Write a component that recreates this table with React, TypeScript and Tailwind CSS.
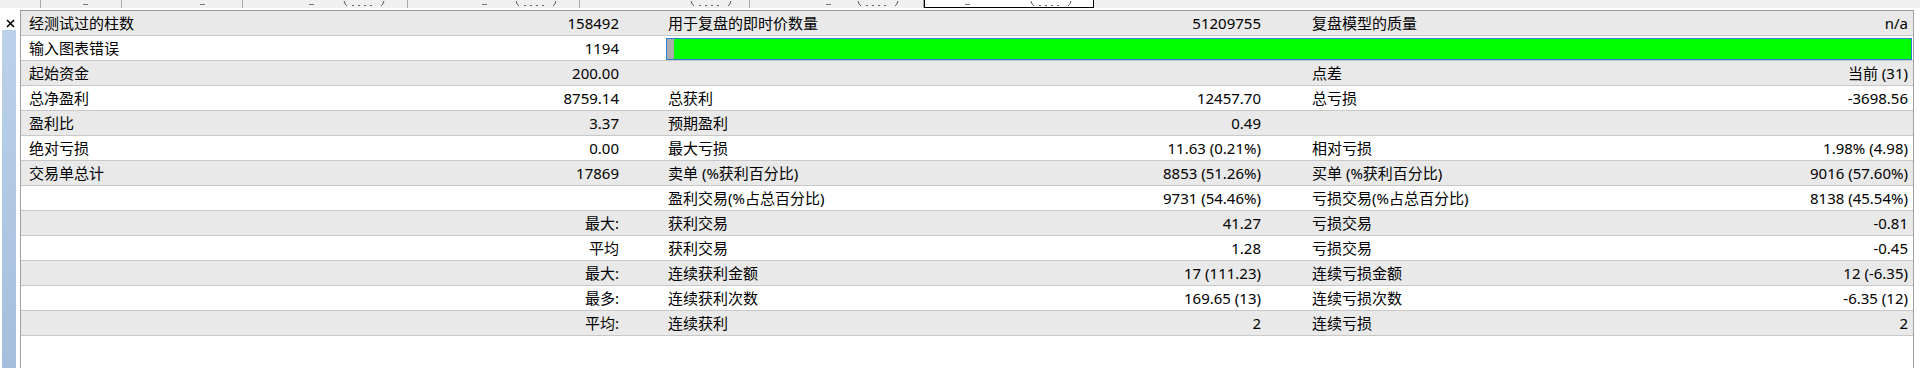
import React from "react";

type Row = {
  l1?: string;
  v1?: string;
  l2?: string;
  v2?: string;
  l3?: string;
  v3?: string;
  bar?: boolean;
};

const rows: Row[] = [
  { l1: "经测试过的柱数", v1: "158492", l2: "用于复盘的即时价数量", v2: "51209755", l3: "复盘模型的质量", v3: "n/a" },
  { l1: "输入图表错误", v1: "1194", bar: true },
  { l1: "起始资金", v1: "200.00", l3: "点差", v3: "当前 (31)" },
  { l1: "总净盈利", v1: "8759.14", l2: "总获利", v2: "12457.70", l3: "总亏损", v3: "-3698.56" },
  { l1: "盈利比", v1: "3.37", l2: "预期盈利", v2: "0.49" },
  { l1: "绝对亏损", v1: "0.00", l2: "最大亏损", v2: "11.63 (0.21%)", l3: "相对亏损", v3: "1.98% (4.98)" },
  { l1: "交易单总计", v1: "17869", l2: "卖单 (%获利百分比)", v2: "8853 (51.26%)", l3: "买单 (%获利百分比)", v3: "9016 (57.60%)" },
  { l2: "盈利交易(%占总百分比)", v2: "9731 (54.46%)", l3: "亏损交易(%占总百分比)", v3: "8138 (45.54%)" },
  { v1: "最大:", l2: "获利交易", v2: "41.27", l3: "亏损交易", v3: "-0.81" },
  { v1: "平均", l2: "获利交易", v2: "1.28", l3: "亏损交易", v3: "-0.45" },
  { v1: "最大:", l2: "连续获利金额", v2: "17 (111.23)", l3: "连续亏损金额", v3: "12 (-6.35)" },
  { v1: "最多:", l2: "连续获利次数", v2: "169.65 (13)", l3: "连续亏损次数", v3: "-6.35 (12)" },
  { v1: "平均:", l2: "连续获利", v2: "2", l3: "连续亏损", v3: "2" },
];

function Cell({ label, value, cls }: { label?: string; value?: string; cls: string }) {
  return (
    <div className={`flex items-center justify-between whitespace-nowrap ${cls}`}>
      <span>{label ?? ""}</span>
      <span>{value ?? ""}</span>
    </div>
  );
}

/* bottoms of clipped tab captions: tiny marks, drawn */
function Marks({ w, marks }: { w: number; marks: { x: number; kind: "dash" | "paren" }[] }) {
  return (
    <svg width={w} height={8} viewBox={`0 0 ${w} 8`} className="block">
      {marks.map((m, i) =>
        m.kind === "dash" ? (
          <path key={i} d={`M${m.x} 4.5 h5`} stroke="#777" strokeWidth="1" />
        ) : (
          <g key={i}>
            <path d={`M${m.x} 1 q1 4 3 5`} stroke="#555" strokeWidth="1" fill="none" />
            <path d={`M${m.x + 8} 5.5 h2 M${m.x + 14} 5.5 h2 M${m.x + 20} 5.5 h2 M${m.x + 26} 5.5 h2`} stroke="#666" strokeWidth="1" />
            <path d={`M${m.x + 40} 1 q-1 4 -3 5`} stroke="#555" strokeWidth="1" fill="none" />
          </g>
        )
      )}
    </svg>
  );
}

function TabStrip() {
  const tabs: { w: number; marks: { x: number; kind: "dash" | "paren" }[] }[] = [
    { w: 41, marks: [] },
    { w: 81, marks: [{ x: 42, kind: "dash" }] },
    { w: 121, marks: [{ x: 78, kind: "dash" }] },
    { w: 165, marks: [{ x: 66, kind: "dash" }, { x: 101, kind: "paren" }] },
    { w: 172, marks: [{ x: 74, kind: "dash" }, { x: 108, kind: "paren" }] },
    { w: 170, marks: [{ x: 111, kind: "paren" }] },
    { w: 174, marks: [{ x: 76, kind: "dash" }, { x: 108, kind: "paren" }] },
  ];
  return (
    <div className="flex h-[8px] bg-[#f0f0f0] overflow-hidden">
      {tabs.map((t, i) => (
        <div key={i} className="h-[8px] border-r border-[#a8a8a8] overflow-hidden">
          <Marks w={t.w - 1} marks={t.marks} />
        </div>
      ))}
      <div className="w-[170px] h-[8px] bg-white border-l border-r border-b border-black overflow-hidden">
        <Marks w={168} marks={[{ x: 40, kind: "dash" }, { x: 106, kind: "paren" }]} />
      </div>
      <div className="flex-1" />
    </div>
  );
}

export default function App() {
  return (
    <div className="w-[1920px] h-[368px] bg-white overflow-hidden font-['Noto_Sans','Noto_Sans_CJK_SC',sans-serif] text-black">
      <TabStrip />
      <div className="flex h-[360px] pt-[2px]">
        {/* sidebar */}
        <div className="w-[20px] flex flex-col items-center">
          <div className="h-[19px] w-[20px] flex items-end justify-center pb-[1px]">
            <svg width="9" height="9" viewBox="0 0 9 9">
              <path d="M1 1 L8 8 M8 1 L1 8" stroke="#000" strokeWidth="1.6" />
            </svg>
          </div>
          <div className="mt-[1px] ml-[-3px] w-[14px] flex-1 bg-gradient-to-b from-[#bcd2ea] to-[#a5bedb]" />
        </div>
        {/* table */}
        <div className="w-[1894px] border-l border-r border-t border-[#a0a0a0] bg-white text-[15px] leading-[24px]">
          {rows.map((r, i) => (
            <div
              key={i}
              className={`flex h-[25px] border-b border-[#c8c8c8] ${i % 2 === 0 ? "bg-[#e9e9e9]" : "bg-white"}`}
            >
              <Cell label={r.l1} value={r.v1} cls="w-[604px] pl-[8px] pr-[6px]" />
              {r.bar ? (
                <div className="w-[1288px] pl-[41px] pr-[1px] flex items-end">
                  <div className="h-[22px] w-full border border-[#2a7fd0] flex">
                    <div className="w-[7px] bg-[#acacac]" />
                    <div className="flex-1 bg-[#00ff00]" />
                  </div>
                </div>
              ) : (
                <>
                  <Cell label={r.l2} value={r.v2} cls="w-[642px] pl-[43px] pr-[6px]" />
                  <Cell label={r.l3} value={r.v3} cls="w-[646px] pl-[45px] pr-[5px]" />
                </>
              )}
            </div>
          ))}
        </div>
        <div className="flex-1 bg-white" />
      </div>
    </div>
  );
}
